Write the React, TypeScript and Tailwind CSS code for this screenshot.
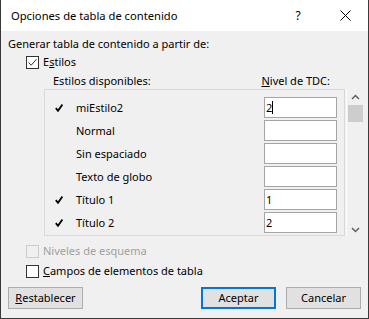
const rows = [
  { name: 'miEstilo2', checked: true, level: '2', focused: true },
  { name: 'Normal', checked: false, level: '' },
  { name: 'Sin espaciado', checked: false, level: '' },
  { name: 'Texto de globo', checked: false, level: '' },
  { name: 'Título 1', checked: true, level: '1' },
  { name: 'Título 2', checked: true, level: '2' },
];

const font = "font-['Segoe_UI','Noto_Sans',sans-serif]";

const Checkbox = ({ checked, disabled }: { checked?: boolean; disabled?: boolean }) => (
  <div
    className={`w-[13px] h-[13px] border flex items-center justify-center ${
      disabled ? 'border-[#cccccc] bg-[#f0f0f0]' : 'border-[#333333] bg-white'
    }`}
  >
    {checked && (
      <svg width="11" height="11" viewBox="0 0 11 11">
        <path d="M1.5 5.5 L4.2 8.2 L9.5 2.2" fill="none" stroke="#333" strokeWidth="1" />
      </svg>
    )}
  </div>
);

const Btn = ({ children, primary }: { children: React.ReactNode; primary?: boolean }) => (
  <button
    className={`w-[75px] h-[22px] bg-[#e1e1e1] text-[11px] text-black flex items-center justify-center ${
      primary ? 'border-2 border-[#0078d7]' : 'border border-[#adadad]'
    }`}
  >
    {children}
  </button>
);

export default function App() {
  return (
    <div className={`w-[369px] h-[319px] bg-[#f0f0f0] border-x border-b border-[#3a3a3a] flex flex-col text-[11px] text-black ${font}`}>
      {/* Title bar */}
      <div className="h-[31px] bg-white flex items-center pl-[10px] shrink-0 text-[11.2px]">
        <span className="flex-1 leading-none">Opciones de tabla de contenido</span>
        <span className="w-[20px] text-center mr-[32px] leading-none text-[12px]">?</span>
        <svg width="11" height="11" viewBox="0 0 11 11" className="mr-[17px]">
          <path d="M0.5 0.5 L10.5 10.5 M10.5 0.5 L0.5 10.5" stroke="#000" strokeWidth="1" />
        </svg>
      </div>

      <div className="flex flex-col pl-[7px]">
        <div className="h-[14px] mt-[6px] leading-[14px]">Generar tabla de contenido a partir de:</div>
        <div className="flex items-center gap-[4px] h-[14px] mt-[4px] pl-[18px]">
          <Checkbox checked />
          <span className="leading-[14px]">
            E<span className="underline">s</span>tilos
          </span>
        </div>
        <div className="flex h-[14px] mt-[5px] leading-[14px]">
          <span className="pl-[45px] flex-1">Estilos disponibles:</span>
          <span className="mr-[38px]">
            <span className="underline">N</span>ivel de TDC:
          </span>
        </div>

        {/* List box + scrollbar */}
        <div className="flex mt-px ml-[36px] h-[147px]">
          <div className="w-[301px] border border-[#d9d9d9] flex flex-col pt-[7px] gap-[2px]">
            {rows.map((r) => (
              <div key={r.name} className="flex items-center h-[21px]">
                <div className="w-[31px] shrink-0 pl-[10px] flex">
                  {r.checked && (
                    <svg width="8" height="8" viewBox="0 0 8 8">
                      <path d="M0.8 4.2 L3 6.8 L7.4 0.6" fill="none" stroke="#000" strokeWidth="1.8" />
                    </svg>
                  )}
                </div>
                <span className="flex-1 leading-none">{r.name}</span>
                <div className="w-[73px] h-[21px] mr-[7px] bg-white border border-[#a5a5a5] flex items-center pl-px leading-none">
                  {r.level}
                  {r.focused && <span className="w-px h-[13px] bg-black" />}
                </div>
              </div>
            ))}
          </div>
          <div className="w-[17px] ml-px border-l border-white flex flex-col items-center">
            <svg width="9" height="6" viewBox="0 0 9 6" className="mt-[5px]">
              <path d="M1 5 L4.5 1.5 L8 5" fill="none" stroke="#606060" strokeWidth="1.5" />
            </svg>
            <div className="w-[15px] h-[17px] bg-[#cdcdcd] mt-[5px]" />
            <div className="flex-1" />
            <svg width="9" height="6" viewBox="0 0 9 6" className="mb-[3px]">
              <path d="M1 1 L4.5 4.5 L8 1" fill="none" stroke="#606060" strokeWidth="1.5" />
            </svg>
          </div>
        </div>

        <div className="flex items-center gap-[4px] h-[14px] mt-[8px] pl-[18px] text-[#a0a0a0]">
          <Checkbox disabled />
          <span className="leading-[14px]">Niveles de esquema</span>
        </div>
        <div className="flex items-center gap-[4px] h-[14px] mt-[6px] pl-[18px]">
          <Checkbox />
          <span className="leading-[14px]">
            <span className="underline">C</span>ampos de elementos de tabla
          </span>
        </div>

        <div className="flex items-center mt-[9px] pr-[7px]">
          <Btn>
            <span>
              <span className="underline">R</span>establecer
            </span>
          </Btn>
          <div className="flex-1" />
          <Btn primary>Aceptar</Btn>
          <div className="w-[10px]" />
          <Btn>Cancelar</Btn>
        </div>
      </div>
    </div>
  );
}
